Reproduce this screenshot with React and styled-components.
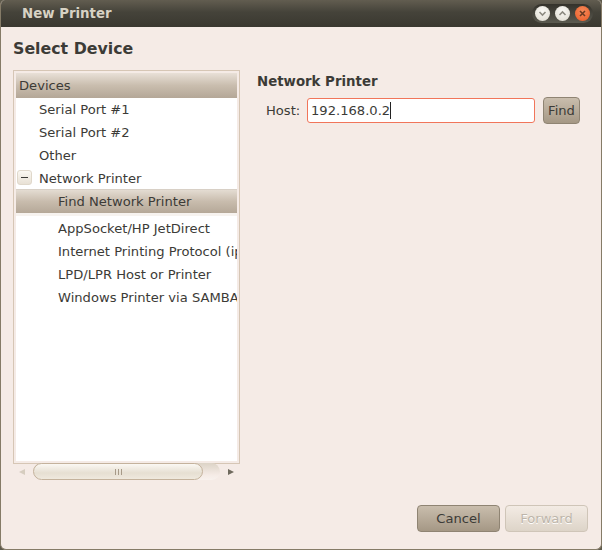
import React from 'react'
import styled, { createGlobalStyle } from 'styled-components'

const GlobalStyle = createGlobalStyle`
  html, body { margin: 0; padding: 0; background: #5e5a4c; }
  * { box-sizing: border-box; }
`

const Window = styled.div`
  width: 602px;
  height: 550px;
  display: flex;
  flex-direction: column;
  font-family: "DejaVu Sans", sans-serif;
  font-size: 13.1px;
  color: #3c3b37;
  background: #f5ebe6;
  border-left: 1px solid #857b67;
  border-right: 1px solid #857b67;
  border-bottom: 1px solid #857b67;
  border-radius: 5px 5px 6px 6px;
  overflow: hidden;
`

const TitleBar = styled.div`
  height: 27px;
  flex: none;
  display: flex;
  align-items: center;
  justify-content: space-between;
  padding: 0 8px 0 21px;
  background: linear-gradient(#625d50 0%, #45433a 45%, #3a3830 100%);
  color: #d7d2c4;
  font-size: 13.33px;
  font-weight: bold;
`

const Controls = styled.div`
  display: flex;
  align-items: center;
  gap: 5px;
  padding: 2px 3px;
  border-radius: 11px;
  background: linear-gradient(#34322b, #5b5a50);
`

const ControlButton = styled.div`
  width: 15px;
  height: 15px;
  border-radius: 50%;
  display: flex;
  align-items: center;
  justify-content: center;
  background: ${p => p.$close
    ? 'radial-gradient(circle at 50% 35%, #f58a5a, #ea5a25)'
    : 'radial-gradient(circle at 50% 35%, #fbfaf6, #dcd8cd)'};
`

const Content = styled.div`
  flex: 1;
  display: flex;
  flex-direction: column;
  padding: 12px 13px 17px 12px;
`

const Heading = styled.div`
  font-size: 15.8px;
  font-weight: bold;
  line-height: 20px;
  margin-bottom: 11px;
`

const Main = styled.div`
  flex: 1;
  display: flex;
  gap: 17px;
`

const LeftColumn = styled.div`
  width: 227px;
  flex: none;
  display: flex;
  flex-direction: column;
`

const TreeFrame = styled.div`
  height: 394px;
  flex: none;
  border: 1px solid #d6c6b5;
  padding: 2px;
  background: #f5ebe6;
`

const Tree = styled.div`
  height: 100%;
  background: #fff;
  overflow: hidden;
  display: flex;
  flex-direction: column;
`

const TreeHeader = styled.div`
  height: 25px;
  flex: none;
  display: flex;
  align-items: center;
  padding-left: 3px;
  background: linear-gradient(#e8e0d7 0%, #c9bdae 50%, #b4a797 100%);
  color: #3c3b37;
`

const TreeRow = styled.div`
  height: 23px;
  flex: none;
  display: flex;
  align-items: center;
  white-space: nowrap;
  padding-left: ${p => (p.$child ? 42 : 23)}px;
  color: #3c3b37;
  position: relative;
`

const SelectedRow = styled(TreeRow)`
  margin-bottom: 4px;
  background: linear-gradient(#e4dcd2 0%, #c8bcad 50%, #b5a898 100%);
  box-shadow: 0 -1px 0 #d8d0c6, 0 3px 0 #f7f3ef;
`

const Expander = styled.div`
  position: absolute;
  left: 1px;
  top: 3px;
  width: 15px;
  height: 15px;
  border: 1px solid #e0d8cb;
  border-radius: 3px;
  background: linear-gradient(#fbf8f2, #e8e1d5);
  display: flex;
  align-items: center;
  justify-content: center;
  &::after {
    content: '';
    width: 7px;
    height: 1px;
    background: #3c3b37;
  }
`

const ScrollBar = styled.div`
  height: 17px;
  display: flex;
  align-items: center;
  padding-left: 6px;
  margin-top: -1px;
`

const Arrow = styled.div`
  width: 0;
  height: 0;
  border-top: 3.5px solid transparent;
  border-bottom: 3.5px solid transparent;
  ${p => p.$right
    ? 'border-left: 6px solid #6f6a5e; margin-left: 8px;'
    : 'border-right: 6px solid #d6cdbf; margin-right: 8px;'}
`

const Trough = styled.div`
  width: 187px;
  height: 17px;
  border-radius: 9px;
  background: linear-gradient(#dcd3c6, #f5ebe6 70%, #f8f2ee);
`

const Thumb = styled.div`
  width: 170px;
  height: 17px;
  border: 1px solid #c4b29c;
  border-radius: 9px;
  background: linear-gradient(#fbf8f3, #e6dfd2 60%, #efe9de);
  display: flex;
  align-items: center;
  justify-content: center;
  gap: 2px;
`

const Grip = styled.div`
  width: 1px;
  height: 6px;
  background: #a79a88;
`

const RightColumn = styled.div`
  flex: 1;
  display: flex;
  flex-direction: column;
  padding-top: 2px;
`

const SectionTitle = styled.div`
  font-weight: bold;
  line-height: 20px;
  margin-bottom: 5px;
  font-size: 13.33px;
`

const HostRow = styled.div`
  display: flex;
  align-items: center;
  padding-left: 9px;
`

const HostLabel = styled.div`
  margin-right: 7px;
  width: 34px;
`

const HostInput = styled.div`
  width: 228px;
  height: 25px;
  border: 1px solid #f1755a;
  border-radius: 3px;
  background: #fff;
  display: flex;
  align-items: center;
  padding-left: 3px;
  margin-right: 8px;
`

const Caret = styled.span`
  width: 1px;
  height: 17px;
  background: #222;
`

const Button = styled.div`
  height: 27px;
  width: ${p => p.$width}px;
  display: flex;
  align-items: center;
  justify-content: center;
  border-radius: 4px;
  border: 1px solid ${p => (p.$disabled ? '#cfc5b8' : '#8f8473')};
  background: ${p => p.$disabled
    ? 'linear-gradient(#f3ebe4, #ddd4c8)'
    : 'linear-gradient(#c9bdad, #a59885)'};
  color: ${p => (p.$disabled ? '#bdb5aa' : '#3c3b37')};
  text-shadow: ${p => (p.$disabled ? '0 1px 0 #fff' : 'none')};
`

const Footer = styled.div`
  display: flex;
  justify-content: flex-end;
  gap: 5px;
`

export default function App() {
  return (
    <Window>
      <GlobalStyle />
      <TitleBar>
        New Printer
        <Controls>
          <ControlButton>
            <svg width="9" height="9" viewBox="0 0 9 9"><path d="M1.5 3 L4.5 6 L7.5 3" fill="none" stroke="#8c8a80" strokeWidth="1.6" /></svg>
          </ControlButton>
          <ControlButton>
            <svg width="9" height="9" viewBox="0 0 9 9"><path d="M1.5 6 L4.5 3 L7.5 6" fill="none" stroke="#8c8a80" strokeWidth="1.6" /></svg>
          </ControlButton>
          <ControlButton $close>
            <svg width="9" height="9" viewBox="0 0 9 9"><path d="M2 2 L7 7 M7 2 L2 7" fill="none" stroke="#6b3a22" strokeWidth="1.6" /></svg>
          </ControlButton>
        </Controls>
      </TitleBar>
      <Content>
        <Heading>Select Device</Heading>
        <Main>
          <LeftColumn>
            <TreeFrame>
              <Tree>
                <TreeHeader>Devices</TreeHeader>
                <TreeRow>Serial Port #1</TreeRow>
                <TreeRow>Serial Port #2</TreeRow>
                <TreeRow>Other</TreeRow>
                <TreeRow><Expander />Network Printer</TreeRow>
                <SelectedRow $child>Find Network Printer</SelectedRow>
                <TreeRow $child>AppSocket/HP JetDirect</TreeRow>
                <TreeRow $child>Internet Printing Protocol (ipp)</TreeRow>
                <TreeRow $child>LPD/LPR Host or Printer</TreeRow>
                <TreeRow $child>Windows Printer via SAMBA</TreeRow>
              </Tree>
            </TreeFrame>
            <ScrollBar>
              <Arrow />
              <Trough><Thumb><Grip /><Grip /><Grip /></Thumb></Trough>
              <Arrow $right />
            </ScrollBar>
          </LeftColumn>
          <RightColumn>
            <SectionTitle>Network Printer</SectionTitle>
            <HostRow>
              <HostLabel>Host:</HostLabel>
              <HostInput>192.168.0.2<Caret /></HostInput>
              <Button $width={37}>Find</Button>
            </HostRow>
          </RightColumn>
        </Main>
        <Footer>
          <Button $width={83}>Cancel</Button>
          <Button $width={83} $disabled>Forward</Button>
        </Footer>
      </Content>
    </Window>
  )
}
